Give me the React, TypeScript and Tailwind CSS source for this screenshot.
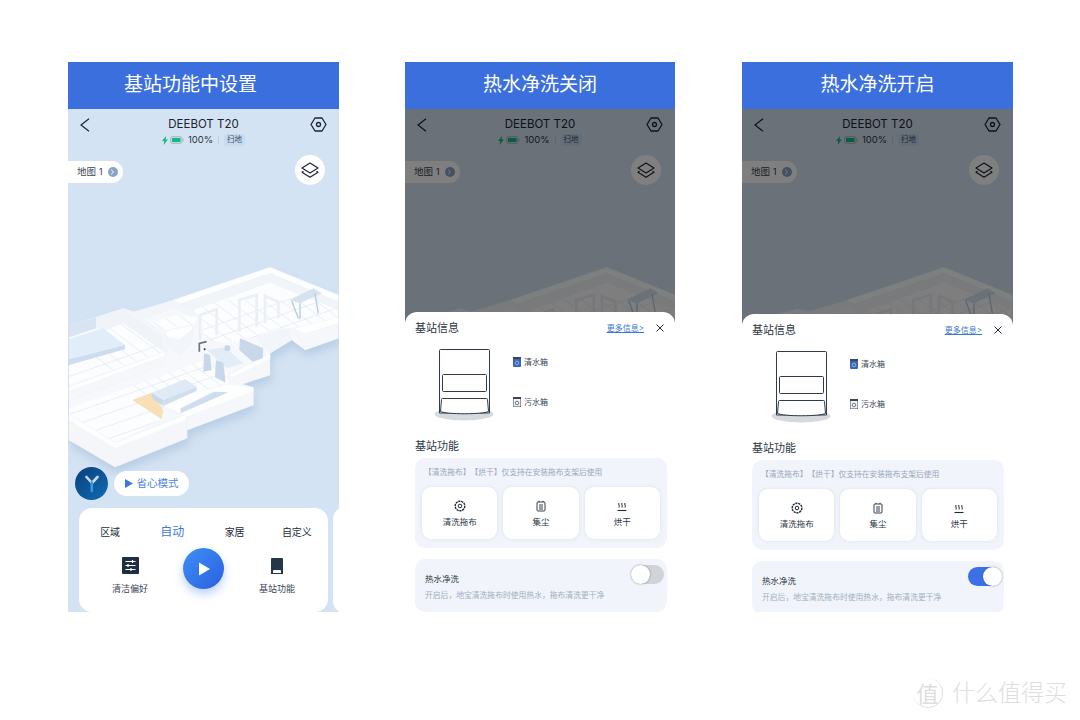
const wallPts = '27,195 110,170 190,145 222,155 340,120 630,22 835,105 835,235 735,270 695,240 630,280 630,345 548,372 580,382 580,435 382,510 382,535 165,621 27,540'

const floors = [
  '400,150 630,68 835,150 835,178 700,205 640,205 590,232 500,250 440,240 420,170',
  '270,190 345,165 415,172 400,195 315,210',
  '130,212 190,190 305,270 305,280 27,375 27,320',
  '27,445 300,350 430,300 505,345 505,385 315,430 305,478 165,548 27,462',
]

const faces = [
  { pts: '360,132 630,40 835,125 835,150 630,68 400,150', fill: '#f1f4f9' },
  { pts: '222,155 345,122 415,160 400,172 345,142 262,172', fill: '#f2f5f9' },
  { pts: '190,148 222,155 320,232 320,275 300,262 130,190 110,172', fill: '#f3f6fa' },
  { pts: '110,172 190,148 305,232 305,270 190,190 130,212 110,205', fill: '#f0f4f9' },
  { pts: '27,380 315,275 315,312 27,422', fill: '#f5f7fb' },
  { pts: '27,322 75,355 27,372', fill: '#f5f7fb' },
  { pts: '27,462 165,548 380,462 380,535 165,621 27,540', fill: '#f4f6fa' },
  { pts: '310,438 505,385 580,382 580,435 382,510 382,462 340,462', fill: '#f5f7fb' },
  { pts: '505,345 630,285 630,345 548,372 505,360', fill: '#f5f7fb' },
  { pts: '590,232 690,205 695,240 630,280', fill: '#f2f5f9' },
  { pts: '700,205 835,178 835,235 735,270', fill: '#f5f7fb' },
  { pts: '318,212 398,196 395,250 358,285 318,250', fill: '#f2f5f9' },
]

const caps = [
  '340,120 630,22 835,105 835,125 630,40 360,132',
  '27,462 165,548 380,462 380,480 165,566 27,482',
  '310,420 505,372 580,382 580,395 382,470 310,438',
  '27,380 315,275 315,288 27,394',
  '505,345 630,280 630,298 520,352',
  '700,205 835,172 835,190 735,222',
  '318,212 398,196 398,208 358,240 318,228',
]

function MapView() {
  return (
    <svg className="absolute inset-0" width="271" height="503" viewBox="68 109 271 503" fill="none">
      <defs>
        <filter id="mapBlur" x="-20%" y="-20%" width="140%" height="140%">
          <feGaussianBlur stdDeviation="12" />
        </filter>
        <clipPath id="floorClip">
          {floors.map((p) => (
            <polygon key={p} points={p} />
          ))}
        </clipPath>
      </defs>
      <rect x="68" y="109" width="271" height="503" fill="#d4e3f3" />
      <g transform="translate(60 260) scale(0.3333)">
        <polygon points={wallPts} fill="#a9c2dd" opacity="0.6" transform="translate(6 20)" filter="url(#mapBlur)" />
        <polygon points={wallPts} fill="#f6f8fb" />
        {faces.map((f) => (
          <polygon key={f.pts} points={f.pts} fill={f.fill} stroke="#ecf1f7" strokeWidth="1.500" />
        ))}
        {floors.map((p) => (
          <polygon key={p} points={p} fill="#fcfdfe" />
        ))}
        <g clipPath="url(#floorClip)" stroke="#dfe7f1" strokeWidth="2">
          {Array.from({ length: 22 }).map((_, i) => (
            <line key={i} x1={-60} y1={380 + i * 38} x2={900} y2={44 + i * 38} />
          ))}
          {Array.from({ length: 30 }).map((_, i) => (
            <line key={i} x1={-120 + i * 52} y1={120} x2={500 + i * 52} y2={585} />
          ))}
        </g>
        {caps.map((p) => (
          <polygon key={p} points={p} fill="#fdfefe" stroke="#eef2f7" strokeWidth="1.500" />
        ))}
        {/* door frames */}
        <g stroke="#ebeff6" strokeWidth="8">
          <path d="M420 240V165L470 148V225" />
          <path d="M538 215V120L590 105V200" />
          <path d="M615 190V108L655 125V175" />
        </g>
        {/* orange patch */}
        <polygon points="217,420 275,398 310,450 305,478" fill="#f8dfb5" />
        {/* bed */}
        <polygon points="27,238 130,205 195,255 27,298" fill="#e1edf9" />
        <polygon points="27,298 195,255 195,268 27,315" fill="#cddcee" />
        <polygon points="27,195 108,172 108,205 27,232" fill="#d8e4f1" />
        {/* centre table and bench */}
        <polygon points="275,398 375,358 410,380 310,420" fill="#dfeaf6" />
        <polygon points="275,398 310,420 310,438 278,418" fill="#c9d9ea" />
        <polygon points="310,420 410,380 410,392 310,438" fill="#d0deed" />
        <polygon points="362,445 462,395 505,397 362,460" fill="#cfdeef" />
        {/* dining set */}
        <polygon points="440,270 495,262 550,310 500,325" fill="#e3edf8" />
        <g fill="#c8d8ea">
          <polygon points="432,280 450,285 455,330 430,335" />
          <polygon points="468,300 490,308 497,368 465,352" />
          <circle cx="502" cy="265" r="9" />
          <polygon points="540,235 610,265 608,295 578,305 538,270" />
        </g>
        {/* right table */}
        <polygon points="690,120 760,85 785,100 720,130" fill="#d5e2f0" />
        <path d="M695 122L715 175M720 130V178M765 100L775 160" stroke="#b9cbdf" strokeWidth="4" />
        {/* robot */}
        <path d="M418 275V250L440 245" stroke="#6c7480" strokeWidth="5" />
        <circle cx="434" cy="268" r="3" fill="#30363f" />
      </g>
    </svg>
  )
}

function HexGear() {
  return (
    <svg width="17" height="15" viewBox="0 0 17 15" fill="none" stroke="#1c2431" strokeWidth="1.300">
      <path d="M5 1h7l4 6.500L12 14H5L1 7.500z" strokeLinejoin="round" />
      <circle cx="8.500" cy="7.500" r="2" />
    </svg>
  )
}

function TopBar() {
  return (
    <div className="relative flex items-start justify-between pl-[12px] pr-[12px] pt-[8px]">
      <svg width="10" height="14" viewBox="0 0 10 14" fill="none" stroke="#1c2431" strokeWidth="1.200" className="mt-[1px]">
        <path d="M9 0.800L1 7l8 6.200" />
      </svg>
      <div className="absolute left-0 right-0 top-[7px] flex flex-col items-center">
        <div className="text-[11.5px] leading-[16px] text-[#1c2431]">DEEBOT T20</div>
        <div className="flex items-center gap-[2px] text-[9.5px] leading-[14px] text-[#2a3442] mt-[1px]">
          <svg width="6" height="9" viewBox="0 0 6 9">
            <path d="M4 0L0 5h2.200L1.600 9 6 3.600H3.600z" fill="#18b97c" />
          </svg>
          <svg width="14" height="8" viewBox="0 0 14 8" className="mr-[2px]">
            <rect x="0.500" y="0.500" width="11.500" height="7" rx="2" fill="#c6d6e6" stroke="#a9bdd0" />
            <rect x="2" y="2" width="8.500" height="4" fill="#14b980" />
            <rect x="12.500" y="2.500" width="1" height="3" fill="#9fb5c8" />
          </svg>
          <span>100%</span>
          <span className="w-px h-[8px] bg-[#bfd0e2] mx-[3px]" />
          <span className="bg-[#c7dbf0] rounded-[2px] px-[3px] text-[7.5px] leading-[12px] text-[#3d5068]">扫地</span>
        </div>
      </div>
      <HexGear />
    </div>
  )
}

function Layers() {
  return (
    <svg width="18" height="16" viewBox="0 0 18 16" fill="none" stroke="#1c2431" strokeWidth="1.200" strokeLinejoin="round">
      <path d="M9 1l8 5-8 5-8-5z" />
      <path d="M2.500 9.200L1 10.200l8 5 8-5-1.500-1" />
    </svg>
  )
}

function MapRow() {
  return (
    <div className="flex items-start justify-between pr-[14px] mt-[23px]">
      <div className="mt-[6px] h-[22px] w-[55px] bg-white rounded-r-full flex items-center pl-[9px] gap-[5px] text-[9.5px] text-[#3a4452]">
        <span>地图 1</span>
        <span className="w-[10px] h-[10px] rounded-full bg-[#8aa2c6] flex items-center justify-center">
          <svg width="5" height="6" viewBox="0 0 5 6" fill="none" stroke="#fff" strokeWidth="1">
            <path d="M1.200 0.800L3.600 3 1.200 5.200" />
          </svg>
        </span>
      </div>
      <div className="w-[30px] h-[30px] rounded-full bg-white flex items-center justify-center">
        <Layers />
      </div>
    </div>
  )
}

function ControlCard() {
  return (
    <div className="flex gap-[5px] pl-[11px] mt-[8px]">
      <div className="w-[249px] h-[104px] shrink-0 bg-white rounded-[13px] pt-[14px]">
        <div className="grid grid-cols-4 text-[10px] leading-[20px] text-[#222c3a] text-center">
          <span>区域</span>
          <span className="text-[12px] text-[#3f78dc]">自动</span>
          <span>家居</span>
          <span>自定义</span>
        </div>
        <div className="grid grid-cols-[102px_1fr_102px]">
          <div className="flex flex-col items-center pt-[15px]">
            <svg width="17" height="17" viewBox="0 0 17 17">
              <rect width="17" height="17" rx="1" fill="#1f2d40" />
              <path d="M3.500 4.500h10M3.500 8.500h10M3.500 12.500h10" stroke="#fff" strokeWidth="1" />
              <path d="M10.500 3v3M6 7v3M9 11v3" stroke="#fff" strokeWidth="1.200" />
            </svg>
            <span className="text-[9px] leading-[12px] mt-[9px] text-[#3b4552] whitespace-nowrap">清洁偏好</span>
          </div>
          <div className="flex justify-center">
            <div className="mt-[6px] w-[41px] h-[41px] shrink-0 rounded-full bg-gradient-to-br from-[#3f8ff7] to-[#2b5fdf] shadow-[0_5px_10px_rgba(62,125,240,0.35)] flex items-center justify-center">
              <svg width="13" height="14" viewBox="0 0 13 14" className="ml-[1px]">
                <path d="M1 0.500L12 7 1 13.500z" fill="#fff" />
              </svg>
            </div>
          </div>
          <div className="flex flex-col items-center pt-[16px]">
            <svg width="14" height="16" viewBox="0 0 14 16">
              <path d="M1 1a1 1 0 0 1 1-1h10a1 1 0 0 1 1 1v15H1z" fill="#25354a" />
              <path d="M3 15v-2a1 1 0 0 1 1-1h6a1 1 0 0 1 1 1v2z" fill="#fff" />
            </svg>
            <span className="text-[9px] leading-[12px] mt-[9px] text-[#3b4552] whitespace-nowrap">基站功能</span>
          </div>
        </div>
      </div>
      <div className="w-[20px] h-[104px] shrink-0 bg-white rounded-[13px]" />
    </div>
  )
}

function DockArt() {
  return (
    <svg width="60" height="74" viewBox="0 0 60 74" fill="none" stroke="#2f3b4a" strokeWidth="1">
      <ellipse cx="30" cy="66" rx="29.500" ry="6.500" fill="#d6dade" stroke="none" />
      <path d="M5.500 2.500a1 1 0 0 1 1-1h48a1 1 0 0 1 1 1V65H5.500z" fill="#fff" />
      <rect x="8.500" y="26.500" width="44" height="17" rx="1" fill="#fff" />
      <path d="M7.500 51.500a1 1 0 0 1 1-1h44a1 1 0 0 1 1 1l1 12c-6 3-42 3-48 0z" fill="#fff" />
    </svg>
  )
}

function TankIcon({ water }: { water: boolean }) {
  return (
    <svg width="8" height="10" viewBox="0 0 8 10">
      <rect x="0" y="0" width="8" height="10" rx="1" fill={water ? '#3b66b8' : '#f2f4f7'} stroke={water ? 'none' : '#3a4655'} strokeWidth="1" />
      <rect x="0" y="0" width="8" height="2" fill={water ? '#39475a' : '#3a4655'} />
      <circle cx="4" cy="6" r="1.800" fill="none" stroke={water ? '#b9cdf0' : '#3a4655'} strokeWidth="0.700" />
    </svg>
  )
}

function WashIcon() {
  return (
    <svg width="12" height="12" viewBox="0 0 12 12" fill="none" stroke="#1f2a38" strokeWidth="1">
      <circle cx="6" cy="6" r="4.800" strokeDasharray="2.200 0.700" strokeWidth="1.400" />
      <circle cx="6" cy="6" r="1.800" />
    </svg>
  )
}

function DustIcon() {
  return (
    <svg width="10" height="12" viewBox="0 0 10 12" fill="none" stroke="#1f2a38" strokeWidth="0.900">
      <path d="M1 3a1 1 0 0 1 1-1h6a1 1 0 0 1 1 1v7a1 1 0 0 1-1 1H2a1 1 0 0 1-1-1z" />
      <path d="M3 2V0.800M7 2V0.800M3 5h4M3 7h4M3 9h4" />
    </svg>
  )
}

function DryIcon() {
  return (
    <svg width="10" height="11" viewBox="0 0 10 11" fill="none" stroke="#1f2a38" strokeWidth="1">
      <path d="M2 1c-1 1.500 1 2.500 0 4.500M5 1c-1 1.500 1 2.500 0 4.500M8 1c-1 1.500 1 2.500 0 4.500" transform="translate(0 1)" />
      <path d="M0.500 9.500h9" strokeWidth="1.100" />
    </svg>
  )
}

function FnButton({ label, icon }: { label: string; icon: React.ReactNode }) {
  return (
    <div className="h-[52px] bg-white rounded-[9px] shadow-[0_0_3px_rgba(190,205,225,0.5)] flex flex-col items-center pt-[13px]">
      <div className="h-[12px] flex items-center">{icon}</div>
      <span className="text-[8.5px] leading-[12px] mt-[4px] text-[#2c3643]">{label}</span>
    </div>
  )
}

function Sheet({ on, topClass }: { on: boolean; topClass: string }) {
  return (
    <div className={`absolute left-0 right-0 bottom-0 bg-white rounded-t-[12px] pl-[10px] pr-[8px] pt-[8px] ${topClass}`}>
      <div className="flex items-center h-[16px]">
        <span className="text-[11px] text-[#2c3643]">基站信息</span>
        <span className="ml-auto text-[8px] underline text-[#3b78d0]">更多信息&gt;</span>
        <svg width="8" height="8" viewBox="0 0 8 8" stroke="#1f2a38" strokeWidth="1" className="ml-[12px] mr-[3px]">
          <path d="M0.500 0.500l7 7M7.500 0.500l-7 7" />
        </svg>
      </div>
      <div className="flex mt-[12px] ml-[19px]">
        <DockArt />
        <div className="ml-[19px] pt-[8px] flex flex-col gap-[28px]">
          <div className="flex items-center gap-[3px] h-[12px] text-[8px] text-[#3b4552]">
            <TankIcon water />
            清水箱
          </div>
          <div className="flex items-center gap-[3px] h-[12px] text-[8px] text-[#3b4552]">
            <TankIcon water={false} />
            污水箱
          </div>
        </div>
      </div>
      <div className="mt-[16px] h-[16px] flex items-center text-[11px] text-[#2c3643]">基站功能</div>
      <div className="mt-[4px] w-[252px] h-[90px] bg-[#f1f4fa] rounded-[10px] px-[7px] pt-[9px]">
        <div className="text-[7.75px] leading-[11px] pl-[2px] text-[#9aa8bd] whitespace-nowrap [text-spacing-trim:space-all]">【清洗拖布】【烘干】仅支持在安装拖布支架后使用</div>
        <div className="grid grid-cols-3 gap-[6px] mt-[9px]">
          <FnButton label="清洗拖布" icon={<WashIcon />} />
          <FnButton label="集尘" icon={<DustIcon />} />
          <FnButton label="烘干" icon={<DryIcon />} />
        </div>
      </div>
      <div className="relative mt-[11px] w-[252px] h-[53px] bg-[#f1f4fa] rounded-[10px] pl-[10px] pt-[14px]">
        <div className="text-[8.5px] leading-[12px] text-[#2c3643]">热水净洗</div>
        <div className="text-[7.8px] leading-[12px] mt-[4px] text-[#a3afc2] whitespace-nowrap">{'开启后\uFF0C地宝清洗拖布时使用热水\uFF0C拖布清洗更干净'}</div>
        {/* toggle */}
        <div className={`absolute right-[3px] top-[6px] w-[33px] h-[19px] rounded-full ${on ? 'bg-[#3b70e6]' : 'bg-[#d0d3d7]'}`}>
          <div className={`absolute top-0 w-[19px] h-[19px] rounded-full bg-white shadow-[0_0_2px_rgba(40,50,70,0.5)] ${on ? 'right-[-1px]' : 'left-0'}`} />
        </div>
      </div>
    </div>
  )
}

function Phone({ title, titleClass, widthClass, children, dimmed }: {
  title: string
  titleClass?: string
  widthClass: string
  dimmed?: boolean
  children?: React.ReactNode
}) {
  return (
    <div className={`h-[550px] flex flex-col shrink-0 ${widthClass}`}>
      <div className={`h-[47px] shrink-0 bg-[#3b6fdd] flex items-center justify-center text-[19px] text-white ${titleClass ?? ''}`}>
        {title}
      </div>
      <div className="relative flex-1 overflow-hidden">
        <MapView />
        <div className="relative h-full flex flex-col">
          <TopBar />
          <MapRow />
          <div className="flex-1" />
          {!dimmed && (
            <div className="flex items-center gap-[6px] pl-[7px]">
              <div className="w-[33px] h-[33px] rounded-full bg-gradient-to-br from-[#0a3f7c] to-[#0f6cb4] flex items-center justify-center">
                <svg width="14" height="18" viewBox="0 0 14 18" fill="none" strokeWidth="2.600" strokeLinecap="round">
                  <path d="M1.500 2L6.500 7.500" stroke="#c7d9ea" />
                  <path d="M12.500 2L7 8" stroke="#c7d9ea" />
                  <path d="M6.800 7.500V16" stroke="#2f9be0" />
                </svg>
              </div>
              <div className="w-[75px] h-[25px] rounded-full bg-white flex items-center justify-center gap-[4px] text-[10.5px] text-[#4a83df]">
                <svg width="8" height="9" viewBox="0 0 8 9">
                  <path d="M0 0L8 4.500 0 9z" fill="#3a78e0" />
                </svg>
                省心模式
              </div>
            </div>
          )}
          {!dimmed && <ControlCard />}
        </div>
        {dimmed && <div className="absolute inset-0 bg-[rgba(0,0,0,0.5)]" />}
        {children}
      </div>
    </div>
  )
}

export default function App() {
  return (
    <div className="relative w-[1080px] h-[720px] bg-white overflow-hidden font-['Inter','Noto_Sans_CJK_SC',sans-serif]">
      <div className="flex pl-[68px] pt-[62px]">
        <Phone title="基站功能中设置" titleClass="pr-[26px]" widthClass="w-[271px] mr-[66px]" />
        <Phone title="热水净洗关闭" widthClass="w-[270px] mr-[67px]" dimmed>
          <Sheet on={false} topClass="top-[203px]" />
        </Phone>
        <Phone title="热水净洗开启" widthClass="w-[271px]" dimmed>
          <Sheet on topClass="top-[205px]" />
        </Phone>
      </div>

      {/* watermark */}
      <div className="absolute left-[913px] top-[678px] flex items-center text-[#dedede]">
        <div className="w-[30px] h-[30px] rounded-full border-r-[1.5px] border-b-[1.5px] border-[#dedede] flex items-center justify-center text-[22px] font-['Noto_Sans_CJK_SC',sans-serif]">值</div>
        <span className="ml-[9px] text-[23px] leading-[28px] font-light whitespace-nowrap">什么值得买</span>
      </div>
    </div>
  )
}
